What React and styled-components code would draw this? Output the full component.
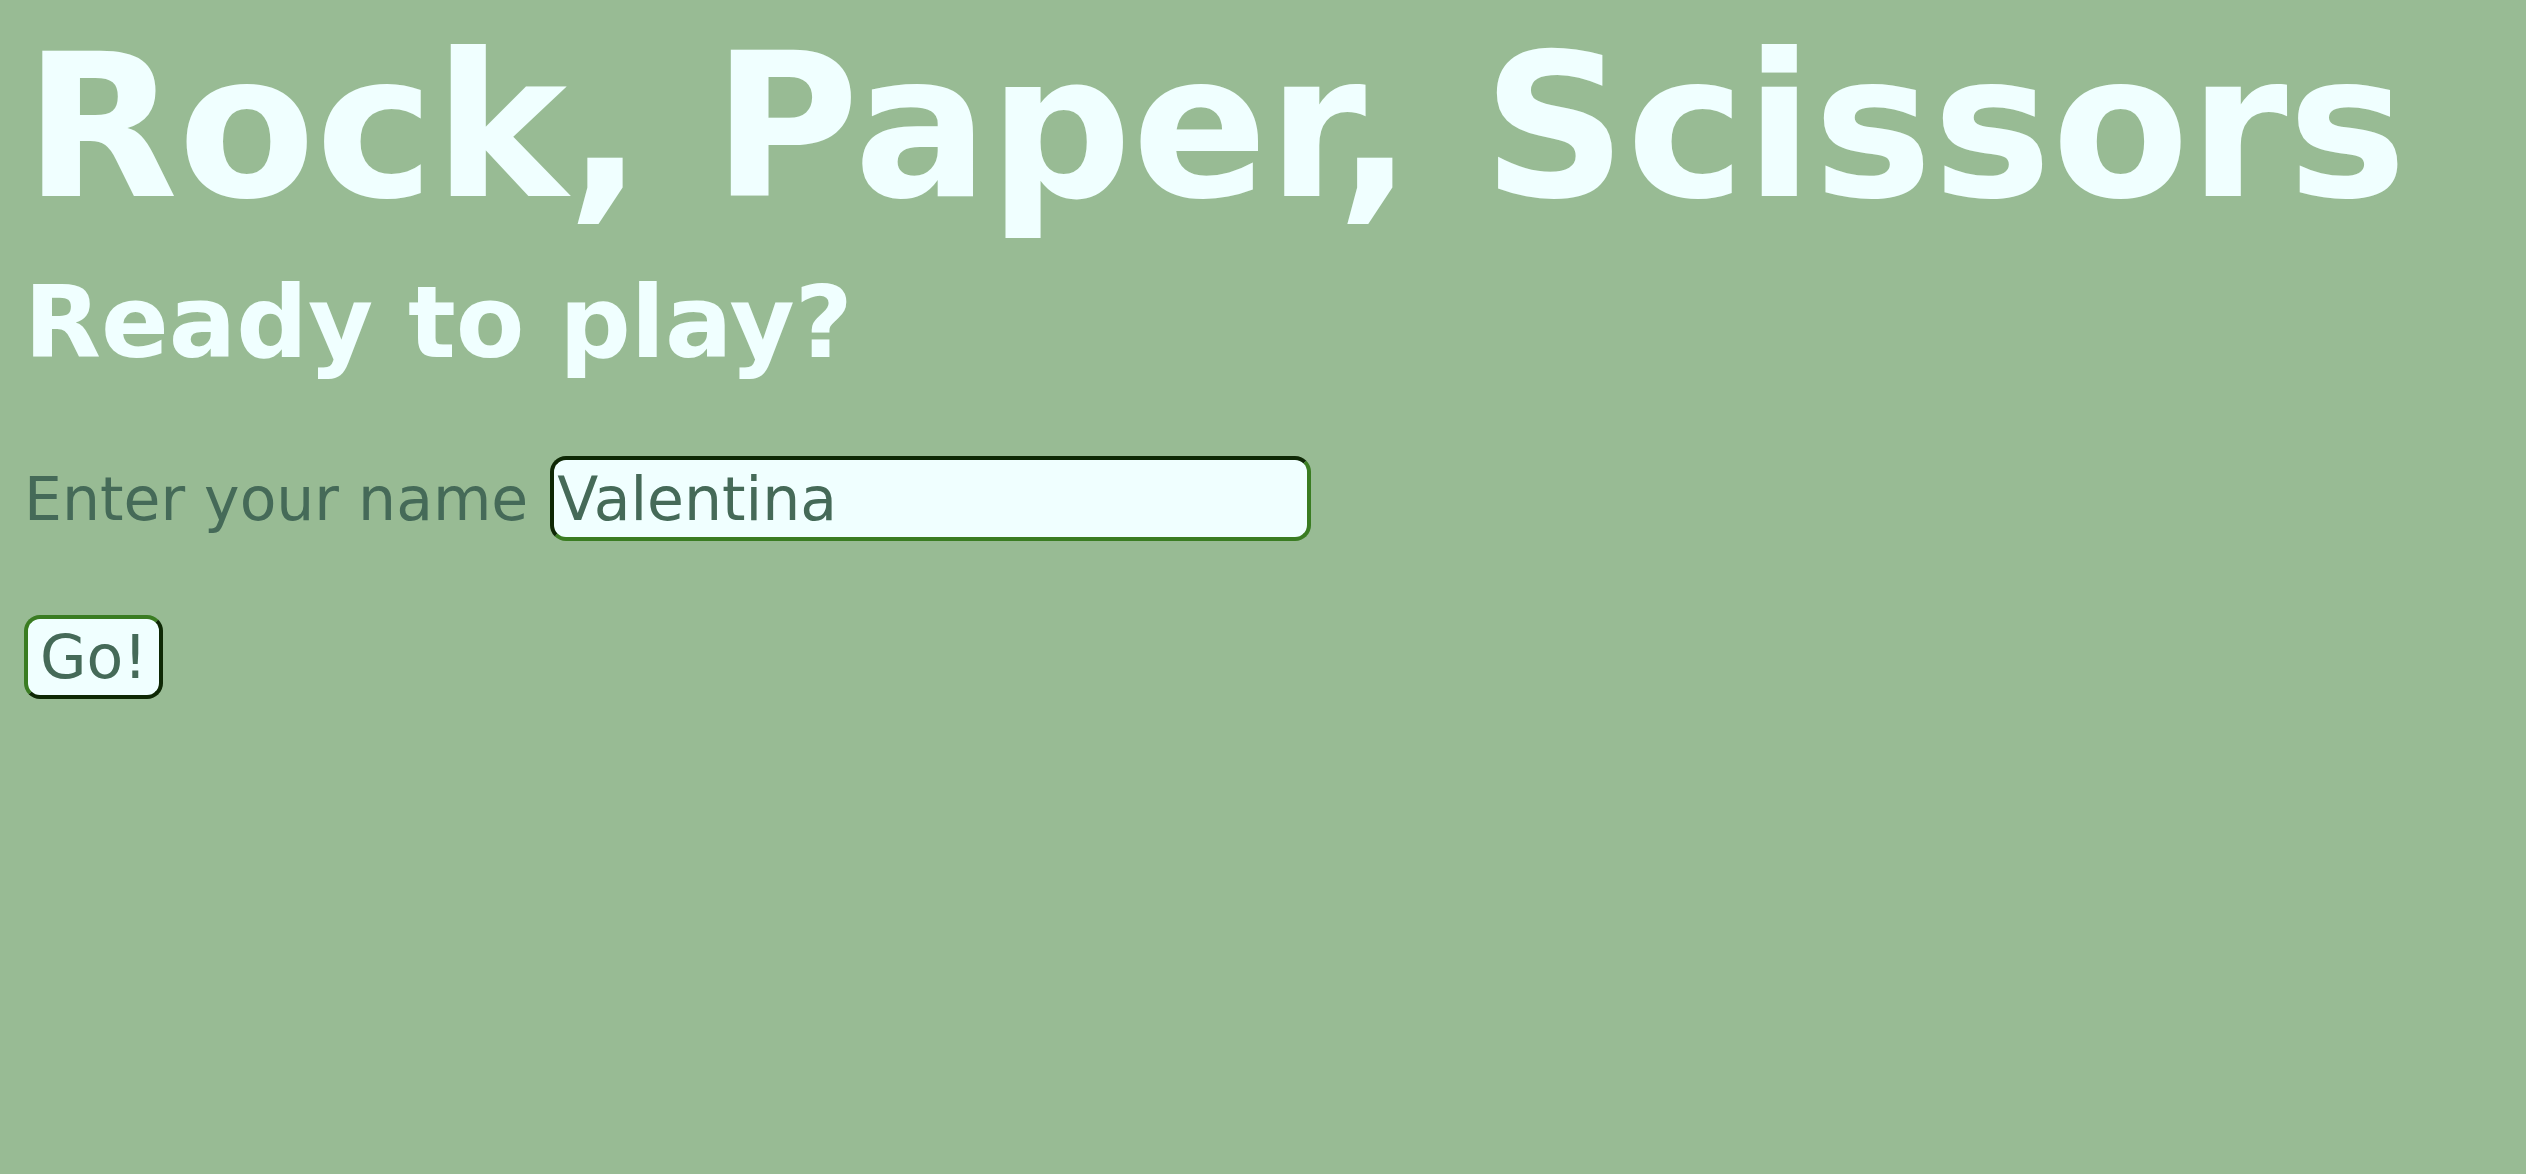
import React, { useState } from "react";
import styled, { createGlobalStyle } from "styled-components";

const GlobalStyle = createGlobalStyle`
  html, body {
    margin: 0;
    padding: 0;
    background: #98bb94;
    min-height: 100%;
  }
  body {
    font-family: Verdana, "DejaVu Sans", sans-serif;
  }
`;

const Page = styled.main`
  min-height: 1174px;
  box-sizing: border-box;
  padding: 10px 24px;
  background: #98bb94;
  display: flex;
  flex-direction: column;
  align-items: flex-start;
`;

const Title = styled.h1`
  margin: 0;
  font-size: 200px;
  font-weight: bold;
  color: #f0ffff;
  line-height: normal;
`;

const Subtitle = styled.h2`
  margin: 21px 0 0;
  font-size: 100px;
  font-weight: bold;
  color: #f0ffff;
  line-height: normal;
`;

const Form = styled.form`
  display: flex;
  flex-direction: column;
  align-items: flex-start;
  gap: 74px;
  margin-top: 75px;
`;

const Field = styled.label`
  display: flex;
  align-items: center;
  gap: 22px;
  font-size: 60px;
  color: #456a58;
`;

const NameInput = styled.input`
  width: 761px;
  box-sizing: border-box;
  height: 85px;
  font-family: Verdana, "DejaVu Sans", sans-serif;
  font-size: 60px;
  color: #456a58;
  background: #f0ffff;
  padding: 1px 3px;
  border: 4px solid;
  border-color: #0e2805 #3a7c22 #3a7c22 #0e2805;
  border-radius: 16px;
  outline: none;
`;

const GoButton = styled.button`
  height: 84px;
  box-sizing: border-box;
  font-family: Verdana, "DejaVu Sans", sans-serif;
  font-size: 60px;
  color: #456a58;
  background: #f0ffff;
  padding: 0 12px;
  border: 4px solid;
  border-color: #3a7c22 #0e2805 #0e2805 #3a7c22;
  border-radius: 16px;
  cursor: pointer;
`;

export default function App() {
  const [name, setName] = useState("Valentina");
  return (
    <>
      <GlobalStyle />
      <Page>
        <Title>Rock, Paper, Scissors</Title>
        <Subtitle>Ready to play?</Subtitle>
        <Form onSubmit={(e) => e.preventDefault()}>
          <Field>
            Enter your name
            <NameInput value={name} onChange={(e) => setName(e.target.value)} />
          </Field>
          <GoButton type="submit">Go!</GoButton>
        </Form>
      </Page>
    </>
  );
}
